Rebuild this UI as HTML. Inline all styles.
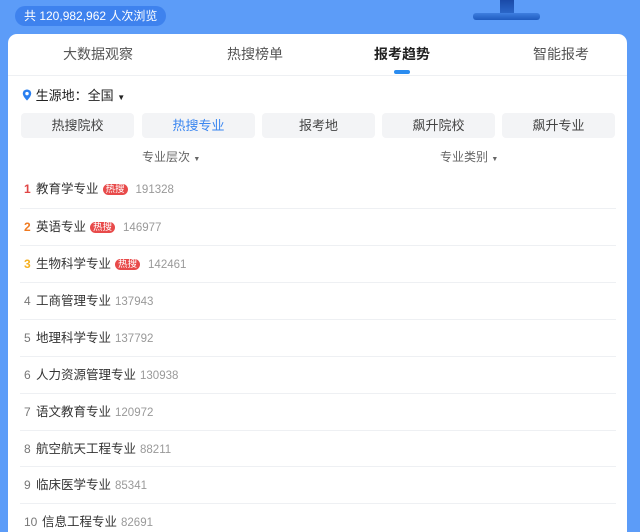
<!DOCTYPE html>
<html><head><meta charset="utf-8"><style>
*{margin:0;padding:0;box-sizing:border-box}
html,body{width:640px;height:532px;overflow:hidden}
body{background:#5c9cf8;font-family:"Liberation Sans","Noto Sans CJK SC",sans-serif;position:relative}
.pill{position:absolute;left:15px;top:6px;height:20px;padding:0 9px;border-radius:10px;background:#3e82ee;color:#fff;font-size:12px;line-height:20px}
.neck{position:absolute;left:500px;top:0;width:14px;height:13px;background:linear-gradient(#1a4aa8,#2a66c8)}
.base{position:absolute;left:473px;top:13px;width:67px;height:7px;border-radius:3px;background:linear-gradient(#3e7fe0,#1f5cc0)}
.card{position:absolute;left:8px;top:34px;width:619px;height:520px;background:#fff;border-radius:9px 9px 0 0}
.tabs{position:absolute;left:0;top:0;width:100%;height:42px;border-bottom:1px solid #eef0f3}
.tab{position:absolute;top:10px;font-size:14px;color:#555;width:120px;text-align:center}
.tab.a{color:#222;font-weight:bold}
.ul{position:absolute;left:386px;top:36px;width:16px;height:4px;border-radius:2px;background:#2a8cf0}
.loc{position:absolute;left:14px;top:51px;font-size:13px;color:#222}
.btn{position:absolute;top:79px;height:25px;width:113px;border-radius:4px;background:#f3f4f6;font-size:13px;color:#444;text-align:center;line-height:25px}
.btn.a{color:#3a86f0}
.flt{position:absolute;top:114px;font-size:12px;color:#666}
.row{position:absolute;left:12px;width:596px;height:37px;border-top:1px solid #eef0f3;font-size:12.5px;color:#333;line-height:36px}
.row.f{border-top:none}
.n{display:inline-block;width:16px;padding-left:4px;color:#777;font-size:12px}
.hot{display:inline-block;background:#e84a4a;color:#fff;font-size:9.5px;line-height:11px;padding:0 3px;border-radius:6px;margin:0 4px 0 4px;vertical-align:1px}
.c{color:#999;font-size:11.5px;margin-left:4px}
</style></head><body>
<div class="pill">共 120,982,962 人次浏览</div>
<div class="neck"></div><div class="base"></div>
<div class="card">
<div class="tabs">
<div class="tab" style="left:30px">大数据观察</div>
<div class="tab" style="left:187px">热搜榜单</div>
<div class="tab a" style="left:334px">报考趋势</div>
<div class="tab" style="left:493px">智能报考</div>
<div class="ul"></div>
</div>
<div class="loc"><svg width="10" height="12" viewBox="0 0 10 12" style="vertical-align:-1px"><path d="M5 0.5C2.5 0.5 0.8 2.3 0.8 4.6 0.8 7.5 5 11.5 5 11.5S9.2 7.5 9.2 4.6C9.2 2.3 7.5 0.5 5 0.5Z" fill="#2a7ff0"/><circle cx="5" cy="4.6" r="1.7" fill="#fff"/></svg> 生源地：全国 <span style="font-size:8px">▼</span></div>
<div class="btn" style="left:13px">热搜院校</div>
<div class="btn a" style="left:134px">热搜专业</div>
<div class="btn" style="left:254px">报考地</div>
<div class="btn" style="left:374px">飙升院校</div>
<div class="btn" style="left:494px">飙升专业</div>
<div class="flt" style="left:134px">专业层次 <span style="font-size:7px">▼</span></div>
<div class="flt" style="left:432px">专业类别 <span style="font-size:7px">▼</span></div>
<div class="row f" style="top:137px"><span class="n" style="color:#e04545;font-weight:bold">1</span>教育学专业<span class="hot">热搜</span><span class="c">191328</span></div>
<div class="row" style="top:174px"><span class="n" style="color:#f07a20;font-weight:bold">2</span>英语专业<span class="hot">热搜</span><span class="c">146977</span></div>
<div class="row" style="top:211px"><span class="n" style="color:#f5b020;font-weight:bold">3</span>生物科学专业<span class="hot">热搜</span><span class="c">142461</span></div>
<div class="row" style="top:248px"><span class="n">4</span>工商管理专业<span class="c">137943</span></div>
<div class="row" style="top:285px"><span class="n">5</span>地理科学专业<span class="c">137792</span></div>
<div class="row" style="top:322px"><span class="n">6</span>人力资源管理专业<span class="c">130938</span></div>
<div class="row" style="top:359px"><span class="n">7</span>语文教育专业<span class="c">120972</span></div>
<div class="row" style="top:396px"><span class="n">8</span>航空航天工程专业<span class="c">88211</span></div>
<div class="row" style="top:432px"><span class="n">9</span>临床医学专业<span class="c">85341</span></div>
<div class="row" style="top:469px"><span class="n" style="width:22px">10</span>信息工程专业<span class="c">82691</span></div>
</div>
</body></html>
